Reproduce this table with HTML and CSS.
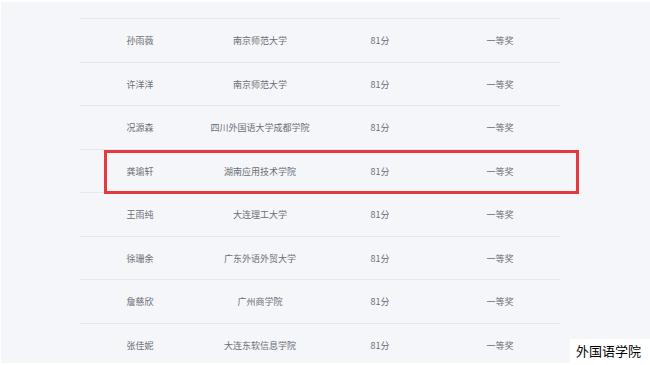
FILE: index.html
```html
<!DOCTYPE html>
<html lang="zh">
<head>
<meta charset="utf-8">
<link rel="stylesheet" href="styles.css">
</head>
<body>
<div class="page">
  <div class="table">
    <div class="row"><span>孙雨薇</span><span>南京师范大学</span><span>81分</span><span>一等奖</span></div>
    <div class="row"><span>许洋洋</span><span>南京师范大学</span><span>81分</span><span>一等奖</span></div>
    <div class="row"><span>况源森</span><span>四川外国语大学成都学院</span><span>81分</span><span>一等奖</span></div>
    <div class="row highlight"><span>龚瑜轩</span><span>湖南应用技术学院</span><span>81分</span><span>一等奖</span></div>
    <div class="row"><span>王雨纯</span><span>大连理工大学</span><span>81分</span><span>一等奖</span></div>
    <div class="row"><span>徐珊余</span><span>广东外语外贸大学</span><span>81分</span><span>一等奖</span></div>
    <div class="row"><span>詹慈欣</span><span>广州商学院</span><span>81分</span><span>一等奖</span></div>
    <div class="row"><span>张佳妮</span><span>大连东软信息学院</span><span>81分</span><span>一等奖</span></div>
  </div>
  <div class="watermark">外国语学院</div>
</div>
</body>
</html>
```
FILE: styles.css
```css
html, body {
  margin: 0;
  padding: 0;
  background: #ffffff;
  overflow: hidden;
}
.page {
  position: relative;
  margin: 2px 0 0 1px;
  width: 649px;
  height: 361px;
  background: #f5f6fa;
  overflow: hidden;
  padding: 16px 0 0 79px;
  box-sizing: border-box;
}
.table {
  width: 480px;
  font-family: "Noto Sans CJK SC", "Noto Sans", sans-serif;
  font-size: 9px;
  color: #6a6d73;
}
.row {
  position: relative;
  display: grid;
  grid-template-columns: repeat(4, 1fr);
  align-items: center;
  height: 44px;
  box-sizing: border-box;
  border-top: 1px solid #e7e8ed;
}
.row:nth-child(even) {
  height: 43px;
}
.row span {
  text-align: center;
}
.highlight {
  z-index: 2;
}
.highlight::after {
  content: "";
  position: absolute;
  left: 24px;
  top: 0;
  width: 475px;
  height: 44px;
  box-sizing: border-box;
  border: 3px solid #e6393f;
}
.watermark {
  position: absolute;
  right: 0;
  bottom: 0;
  width: 80px;
  height: 24px;
  background: #ffffff;
  color: #000000;
  font-family: "Noto Sans CJK SC", sans-serif;
  font-size: 13px;
  line-height: 23px;
  text-align: right;
  padding-right: 9px;
  box-sizing: border-box;
}
```
